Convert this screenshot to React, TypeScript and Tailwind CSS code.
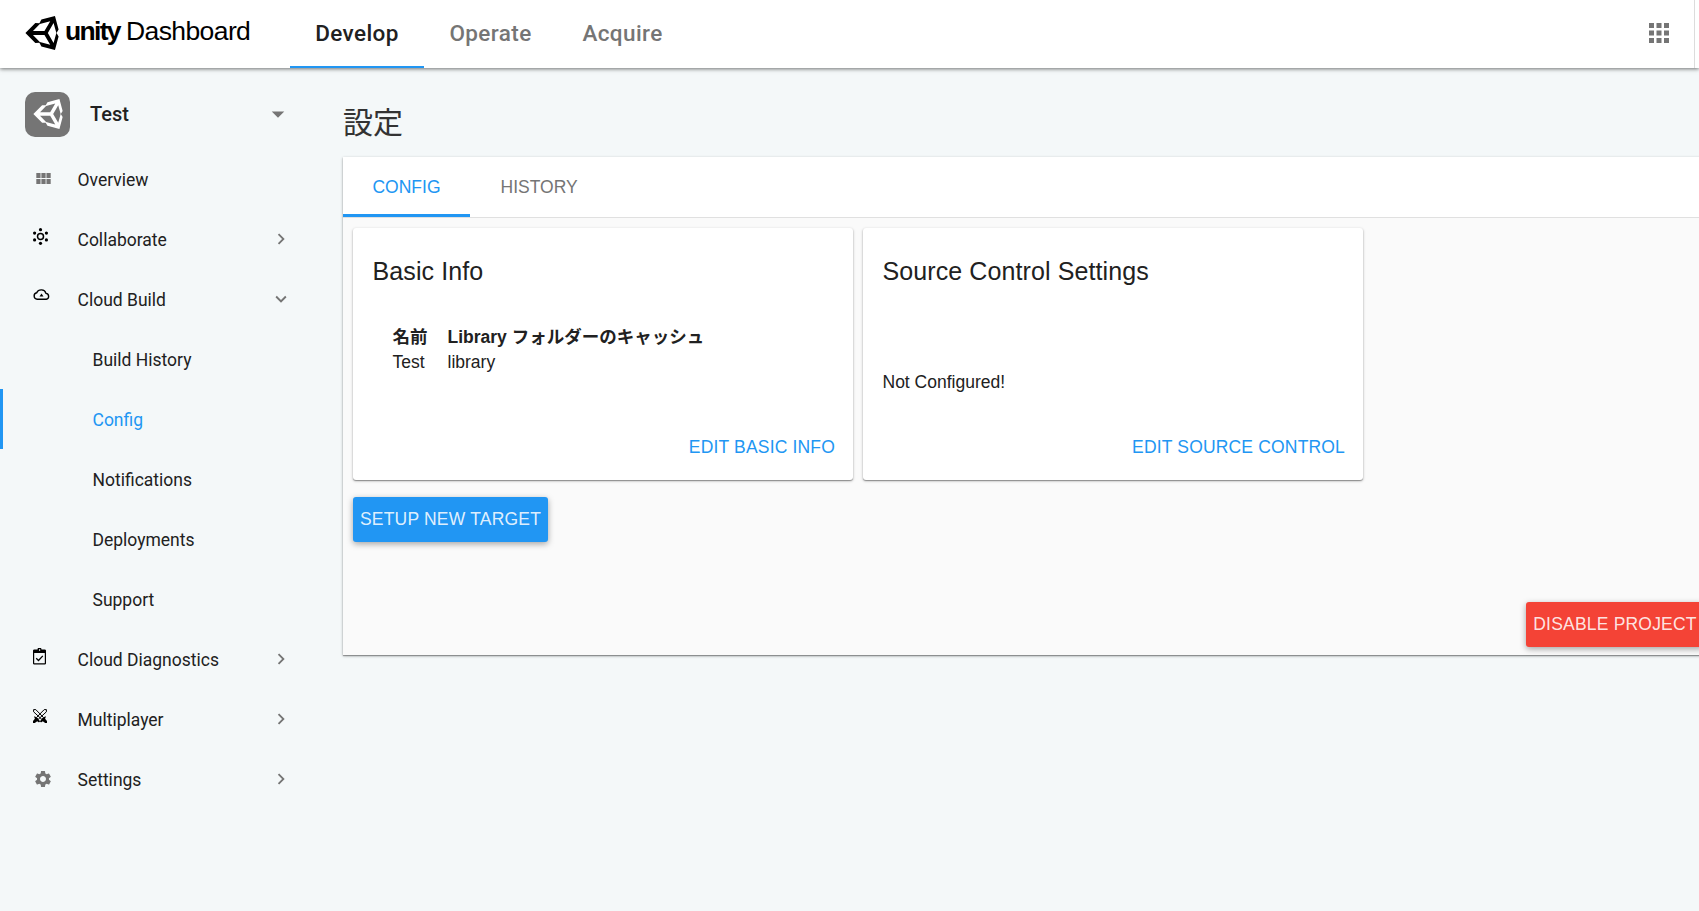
import { ReactNode } from "react";
import {
  MdApps,
  MdArrowDropDown,
  MdChevronRight,
  MdExpandMore,
  MdSettings,
} from "react-icons/md";

type NavItem = {
  label: string;
  icon: ReactNode;
  open?: boolean;
  leaf?: boolean;
  children?: string[];
};

function UnityMark({ className }: { className: string }) {
  return (
    <svg viewBox="0 0 64 64" fill="currentColor" fillRule="evenodd" className={className}>
      <path d="M63.22 25.42 56.39 0 30.87 6.81 27.1 13.45l-7.67-.05L.78 32l18.65 18.6 7.66-.05 3.78 6.63L56.39 64l6.83-25.42L59.34 32zM27.9 14.9 47.5 9.8 36.6 28.2H15zM27.9 49.1 15 35.8h21.6l10.9 18.4zM53.8 50.6 43 32l10.8-18.6L59 32z" />
    </svg>
  );
}

const OverviewIcon = (
  <svg viewBox="4 5 17 13" className="ml-[3px] mb-[1px] w-[15px] h-[11px] fill-[#757575]">
    <path d="M4 11h5V5H4v6zm0 7h5v-6H4v6zm6 0h5v-6h-5v6zm6 0h5v-6h-5v6zm-6-7h5V5h-5v6zm6-6v6h5V5h-5z" />
  </svg>
);

const CollaborateIcon = (
  <svg viewBox="0 0 15 17" className="mb-[5px] w-[15px] h-[17px]">
    <circle cx="7.5" cy="8.5" r="3" fill="none" stroke="black" strokeWidth="1.5" />
    <circle cx="7.5" cy="1.7" r="1.6" />
    <circle cx="7.5" cy="15.3" r="1.6" />
    <circle cx="1.6" cy="5.1" r="1.6" />
    <circle cx="13.4" cy="5.1" r="1.6" />
    <circle cx="1.6" cy="11.9" r="1.6" />
    <circle cx="13.4" cy="11.9" r="1.6" />
  </svg>
);

const CloudIcon = (
  <svg viewBox="0 0 17 11" className="mb-[9px] w-[17px] h-[11px]">
    <path
      d="M4.2 10.3a3.3 3.3 0 0 1-.5-6.5A5 5 0 0 1 13 4.4a3 3 0 0 1 .3 5.9z"
      fill="none"
      stroke="black"
      strokeWidth="1.4"
    />
    <path d="M8.5 4.5 10.5 7.5h-4z" />
  </svg>
);

const DiagnosticsIcon = (
  <svg viewBox="0 0 13 17" className="mb-[5px] w-[13px] h-[17px]">
    <path
      fillRule="evenodd"
      d="M1.5 1.5h3a2 2 0 0 1 4 0h3A1.4 1.4 0 0 1 13 3v12a1.4 1.4 0 0 1-1.5 1.5h-10A1.4 1.4 0 0 1 0 15V3a1.4 1.4 0 0 1 1.5-1.5zM1.2 5v10.3h10.6V5zM6 1.3v1.4h1.2V1.3z"
    />
    <path d="m3.2 10.3 2.3 2.2 4.3-4.6" fill="none" stroke="black" strokeWidth="1.3" />
  </svg>
);

const MultiplayerIcon = (
  <svg viewBox="0 0 14 14" className="mb-[6px] w-[14px] h-[14px]">
    <path d="M.6.6h2.2l7.6 7.8-1.8 1.8L.6 2.8zM13.4.6h-2.2L3.6 8.4l1.8 1.8 8-7.4z" fill="none" stroke="black" />
    <path d="M1 7.2 3 8l3.4 3.2.6 1.8-1.4.2-1.4-1L1.8 14 0 13.9v-1.8l1.9-2.3zM13 7.2 11 8l-3.4 3.2-.6 1.8 1.4.2 1.4-1 2.4 1.8 1.8-.1v-1.8l-1.9-2.3z" />
  </svg>
);

const navItems: NavItem[] = [
  { label: "Overview", icon: OverviewIcon, leaf: true },
  { label: "Collaborate", icon: CollaborateIcon },
  {
    label: "Cloud Build",
    icon: CloudIcon,
    open: true,
    children: ["Build History", "Config", "Notifications", "Deployments", "Support"],
  },
  { label: "Cloud Diagnostics", icon: DiagnosticsIcon },
  { label: "Multiplayer", icon: MultiplayerIcon },
  { label: "Settings", icon: <MdSettings className="size-[20px] text-[#757575]" /> },
];

function Header() {
  return (
    <header className="z-10 flex h-[68px] shrink-0 bg-white shadow-[0_1px_4px_rgba(0,0,0,0.55)]">
      <div className="flex w-[290px] items-center pl-[25px] pb-[2px]">
        <UnityMark className="size-[34px] text-black" />
        <div className="flex items-baseline whitespace-nowrap pl-[6px] pb-[2px] font-['Liberation_Sans',Arial,sans-serif] text-[26.5px] text-black">
          <span className="w-[61px] font-bold tracking-[-1.7px]">unity</span>
          <span className="tracking-[-0.6px]">Dashboard</span>
        </div>
      </div>
      <nav className="flex text-[22.5px] font-medium tracking-[0.4px] text-[#757575]">
        <a className="flex w-[134px] items-center justify-center border-b-2 border-[#2196f3] pt-[2px] text-[#212121]">
          Develop
        </a>
        <a className="flex w-[133px] items-center justify-center">Operate</a>
        <a className="flex w-[131px] items-center justify-center">Acquire</a>
      </nav>
      <div className="ml-auto mr-[4px] flex items-center border-r border-[#dcdcdc] pr-[20px]">
        <MdApps className="mb-[2px] size-[30px] text-[#757575]" />
      </div>
    </header>
  );
}

function Sidebar() {
  return (
    <aside className="w-[343px] shrink-0 pt-[24px] text-[17.5px] text-[#212121]">
      <div className="flex h-[45px] items-center pl-[25px] mb-[12px]">
        <div className="flex size-[45px] items-center justify-center rounded-[10px] bg-[#757575]">
          <UnityMark className="mb-px size-[30px] text-white" />
        </div>
        <span className="ml-[20px] w-[173px] pb-[2px] text-[20px] font-medium">Test</span>
        <MdArrowDropDown className="mb-[2px] size-[30px] text-[#757575]" />
      </div>
      {navItems.map((item) => (
        <div key={item.label}>
          <div className="flex h-[60px] items-center">
            <div className="flex w-[77.5px] items-center pl-[33px]">{item.icon}</div>
            <span className="w-[192.5px] pt-[2px]">{item.label}</span>
            {item.open && <MdExpandMore className="size-[22px] text-[#757575]" />}
            {!item.open && !item.leaf && <MdChevronRight className="size-[22px] text-[#757575]" />}
          </div>
          {item.children?.map((child) => (
            <div
              key={child}
              className={
                child === "Config"
                  ? "flex h-[60px] items-center border-l-3 border-[#2196f3] pt-[2px] pl-[89.5px] text-[#2196f3]"
                  : "flex h-[60px] items-center pt-[2px] pl-[92.5px]"
              }
            >
              {child}
            </div>
          ))}
        </div>
      ))}
    </aside>
  );
}

function Card({ title, action, children }: { title: string; action: string; children: ReactNode }) {
  return (
    <div className="flex h-[252px] w-[500px] flex-col rounded-[3px] bg-white px-[20px] pt-[28px] pb-[18px] shadow-[0_1px_3px_rgba(0,0,0,0.28),0_1px_1px_rgba(0,0,0,0.3)]">
      <h2 className="-ml-[0.5px] text-[25px] leading-[30px] tracking-[0.1px]">{title}</h2>
      {children}
      <button className="mt-auto -mr-[2px] self-end text-[17.5px] leading-[30px] tracking-[0.17px] text-[#2196f3]">{action}</button>
    </div>
  );
}

function ConfigPanel() {
  return (
    <section className="-mr-[15px] flex h-[498px] flex-col bg-[#fafafa] font-['Liberation_Sans',Arial,'Noto_Sans_CJK_JP',sans-serif] text-[17.5px] text-[#212121] shadow-[0_1px_3px_rgba(0,0,0,0.28),0_1px_1px_rgba(0,0,0,0.3)]">
      <div className="flex h-[61px] shrink-0 border-b border-[#e0e0e0] bg-white">
        <a className="flex w-[127px] items-center justify-center border-b-3 border-[#2196f3] pt-[3px] text-[#2196f3]">
          CONFIG
        </a>
        <a className="flex items-center px-[30.5px] text-[#757575]">HISTORY</a>
      </div>
      <div className="flex gap-[10px] px-[10px] pt-[10px]">
        <Card title="Basic Info" action="EDIT BASIC INFO">
          <table className="mt-[39px] ml-[19.5px] w-fit text-left leading-[25px]">
            <thead>
              <tr>
                <th className="w-[55px] p-0">名前</th>
                <th className="p-0 whitespace-nowrap">Library フォルダーのキャッシュ</th>
              </tr>
            </thead>
            <tbody>
              <tr>
                <td className="p-0">Test</td>
                <td className="p-0">library</td>
              </tr>
            </tbody>
          </table>
        </Card>
        <Card title="Source Control Settings" action="EDIT SOURCE CONTROL">
          <p className="mt-[84px] -ml-[0.5px] leading-[25px]">Not Configured!</p>
        </Card>
      </div>
      <button className="mt-[17px] ml-[10px] h-[45px] w-[195px] rounded-[3px] bg-[#2196f3] tracking-[0.2px] text-white/87 shadow-[0_2px_6px_rgba(0,0,0,0.35)]">
        SETUP NEW TARGET
      </button>
      <button className="mt-auto mb-[8px] mr-[10px] h-[45px] w-[178px] self-end rounded-[3px] bg-[#f44336] tracking-[0.2px] text-white/87 shadow-[0_2px_6px_rgba(0,0,0,0.35)]">
        DISABLE PROJECT
      </button>
    </section>
  );
}

export default function App() {
  return (
    <div className="flex h-[911px] w-[1699px] flex-col overflow-hidden bg-[#f4f8f9] font-[Roboto,'Noto_Sans_CJK_JP',sans-serif]">
      <Header />
      <div className="flex flex-1">
        <Sidebar />
        <main className="min-w-0 flex-1 pt-[32px]">
          <h1 className="mb-[12px] h-[45px] text-[30px] leading-[45px] text-[#333]">設定</h1>
          <ConfigPanel />
        </main>
      </div>
    </div>
  );
}
